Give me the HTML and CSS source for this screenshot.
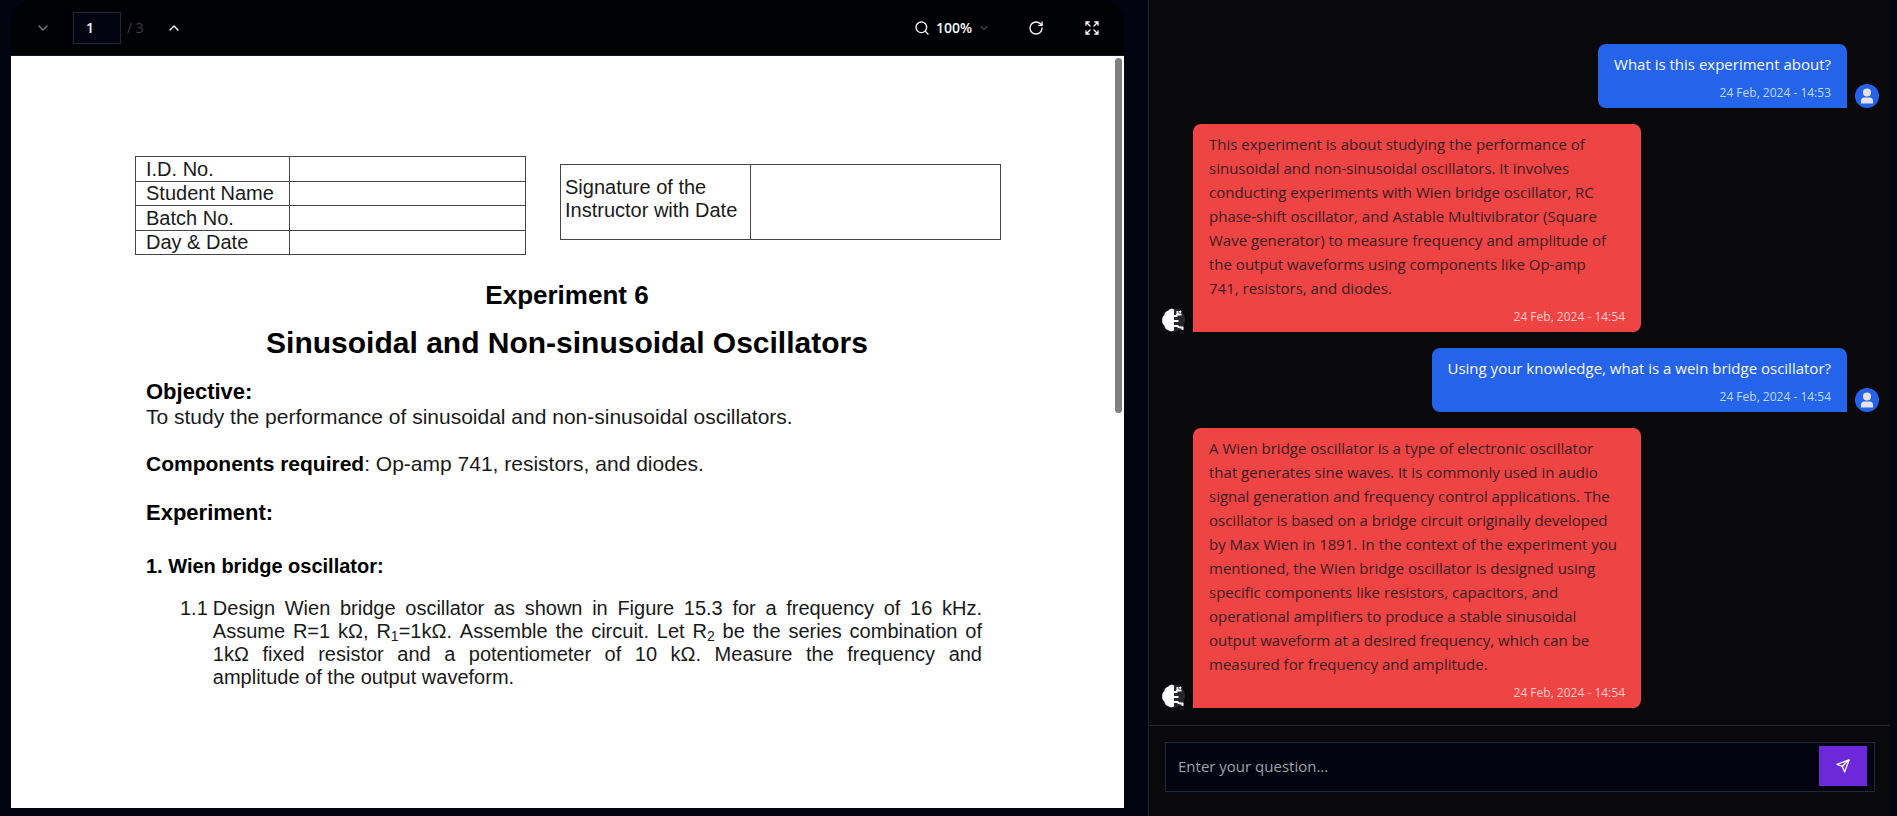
FILE: index.html
```html
<!DOCTYPE html>
<html lang="en">
<head>
<meta charset="utf-8">
<title>Document chat</title>
<link rel="stylesheet" href="styles.css">
</head>
<body>
<main class="app">
  <section class="viewer">
    <header class="toolbar">
      <div class="pager">
        <button class="icon-btn is-dim" aria-label="Previous page"><svg class="icon" viewBox="0 0 24 24"><path d="m6 9 6 6 6-6"/></svg></button>
        <div class="page-field">
          <input class="page-input" type="text" value="1" aria-label="Page number">
          <span class="page-total">/ 3</span>
        </div>
        <button class="icon-btn" aria-label="Next page"><svg class="icon" viewBox="0 0 24 24"><path d="m18 15-6-6-6 6"/></svg></button>
      </div>
      <div class="tools">
        <button class="zoom-btn" aria-label="Zoom"><svg class="icon" viewBox="0 0 24 24"><circle cx="11" cy="11" r="8"/><path d="m21 21-4.3-4.3"/></svg>100%<svg class="icon icon-small is-dim" viewBox="0 0 24 24"><path d="m6 9 6 6 6-6"/></svg></button>
        <button class="icon-btn" aria-label="Rotate"><svg class="icon" viewBox="0 0 24 24"><path d="M21 12a9 9 0 1 1-9-9c2.520 0 4.930 1 6.740 2.740L21 8"/><path d="M21 3v5h-5"/></svg></button>
        <button class="icon-btn" aria-label="Full screen"><svg class="icon" viewBox="0 0 24 24"><path d="m21 21-6-6m6 6v-4.800m0 4.800h-4.800"/><path d="M3 16.200V21m0 0h4.800M3 21l6-6"/><path d="M21 7.800V3m0 0h-4.800M21 3l-6 6"/><path d="M3 7.800V3m0 0h4.800M3 3l6 6"/></svg></button>
      </div>
    </header>
    <article class="page">
      <div class="scroll-thumb"></div>
      <div class="form-tables">
        <table class="id-table">
          <tr><th scope="row">I.D. No.</th><td></td></tr>
          <tr><th scope="row">Student Name</th><td></td></tr>
          <tr><th scope="row">Batch No.</th><td></td></tr>
          <tr><th scope="row">Day &amp; Date</th><td></td></tr>
        </table>
        <table class="sign-table">
          <tr><th scope="row">Signature of the<br>Instructor with Date</th><td></td></tr>
        </table>
      </div>
      <h1 class="exp-number">Experiment 6</h1>
      <h2 class="exp-title">Sinusoidal and Non-sinusoidal Oscillators</h2>
      <h3 class="doc-heading">Objective:</h3>
      <p class="doc-text">To study the performance of sinusoidal and non-sinusoidal oscillators.</p>
      <p class="doc-text components"><b>Components required</b>: Op-amp 741, resistors, and diodes.</p>
      <h3 class="doc-heading experiment">Experiment:</h3>
      <h4 class="doc-subheading">1. Wien bridge oscillator:</h4>
      <div class="step">
        <span>1.1</span>
        <p class="step-text">Design Wien bridge oscillator as shown in Figure 15.3 for a frequency of 16 kHz. Assume R=1 kΩ, R<sub>1</sub>=1kΩ. Assemble the circuit. Let R<sub>2</sub> be the series combination of 1kΩ fixed resistor and a potentiometer of 10 kΩ. Measure the frequency and amplitude&nbsp;of the output waveform.</p>
      </div>
    </article>
  </section>
  <section class="chat">
    <div class="messages">
      <div class="message from-user">
        <div class="bubble"><p>What is this experiment about?</p><time>24 Feb, 2024 - 14:53</time></div>
        <svg class="avatar" viewBox="0 0 24 24"><circle cx="12" cy="12" r="12" fill="#2563eb"/><circle cx="12" cy="8.500" r="4" fill="#e4e4e7"/><path d="M6 19.500v-2.500a3.500 3.500 0 0 1 3.500-3.500h5a3.500 3.500 0 0 1 3.500 3.500v2.500z" fill="#e4e4e7"/></svg>
      </div>
      <div class="message from-bot">
        <svg class="avatar" viewBox="0 0 24 24"><use href="#brain"/></svg>
        <div class="bubble"><p>This experiment is about studying the performance of sinusoidal and non-sinusoidal oscillators. It involves conducting experiments with Wien bridge oscillator, RC phase-shift oscillator, and Astable Multivibrator (Square Wave generator) to measure frequency and amplitude of the output waveforms using components like Op-amp<br>741, resistors, and diodes.</p><time>24 Feb, 2024 - 14:54</time></div>
      </div>
      <div class="message from-user">
        <div class="bubble"><p>Using your knowledge, what is a wein bridge oscillator?</p><time>24 Feb, 2024 - 14:54</time></div>
        <svg class="avatar" viewBox="0 0 24 24"><circle cx="12" cy="12" r="12" fill="#2563eb"/><circle cx="12" cy="8.500" r="4" fill="#e4e4e7"/><path d="M6 19.500v-2.500a3.500 3.500 0 0 1 3.500-3.500h5a3.500 3.500 0 0 1 3.500 3.500v2.500z" fill="#e4e4e7"/></svg>
      </div>
      <div class="message from-bot">
        <svg class="avatar" viewBox="0 0 24 24">
          <g id="brain">
            <circle cx="12.500" cy="12" r="11.500" fill="#27272a"/>
            <path d="M13 1.500C12 .5 8.500.5 7.500 2.500 5 3 3.500 5 3.500 7 1.500 8.500 1 10.500 1.200 13c0 2 .8 3.500 2.300 4.500C3.800 20 5 21.500 7 22c1.500 1.600 4.500 1.800 6 .5z" fill="#fafafa"/>
            <path d="M12 8h3.500l1-2V3M16 6.500h4.500M20 3l-1.500 1.500M12 13h5.500M12 18h4.500c1 2 2.500 1.500 5 1.500v2.500" fill="none" stroke="#fafafa" stroke-width="2"/>
          </g>
        </svg>
        <div class="bubble"><p>A Wien bridge oscillator is a type of electronic oscillator that generates sine waves. It is commonly used in audio signal generation and frequency control applications. The oscillator is based on a bridge circuit originally developed by Max Wien in 1891. In the context of the experiment you mentioned, the Wien bridge oscillator is designed using specific components like resistors, capacitors, and operational amplifiers to produce a stable sinusoidal output waveform at a desired frequency, which can be measured for frequency and amplitude.</p><time>24 Feb, 2024 - 14:54</time></div>
      </div>
    </div>
    <form class="composer">
      <div class="composer-box">
        <input class="question" type="text" placeholder="Enter your question..." aria-label="Your question">
        <button class="send" type="button" aria-label="Send"><svg class="icon" viewBox="0 0 24 24"><path d="m3 9.500 18-6.500-6.500 18-3.500-8.500z"/><path d="M21 3 11 12.500"/></svg></button>
      </div>
    </form>
  </section>
</main>
</body>
</html>
```
FILE: styles.css
```css
* { box-sizing: border-box; margin: 0; padding: 0; }
body { background: #02050f; color: #fafafa; font: 15px/24px "Open Sans", sans-serif; }
button, input { font: inherit; color: inherit; border: 0; background: none; }
.app { display: grid; grid-template-columns: 1148fr 742fr; height: 100vh; padding-right: 7px; }

.viewer { display: flex; flex-direction: column; padding: 0 24px 8px 11px; min-width: 0; }
.toolbar { display: flex; justify-content: space-between; align-items: center; height: 56px; flex: none; padding: 0 8px; background: #000104; border-bottom: 1px solid #10141d; border-radius: 24px 24px 0 0; }
.pager, .tools, .page-field { display: flex; align-items: center; }
.pager { gap: 6px; }
.page-field { gap: 6px; }
.icon { width: 16px; height: 16px; fill: none; stroke: currentColor; stroke-width: 2; stroke-linecap: round; stroke-linejoin: round; flex: none; }
.icon-small { width: 12px; height: 12px; }
.is-dim { opacity: 0.5; }
.icon-btn { display: grid; place-items: center; width: 48px; height: 40px; }
.page-input { width: 48px; height: 32px; padding: 0 12px; background: #02050f; border: 1px solid #1e293b; font-size: 14px; font-weight: 600; }
.page-total { font-size: 14px; color: #3f3f46; }
.tools { gap: 8px; }
.zoom-btn { display: flex; align-items: center; gap: 6px; height: 40px; padding: 0 14px 0 12px; font-size: 14px; font-weight: 600; }

.page { position: relative; flex: 1; min-height: 0; overflow: hidden; padding: 100px 136px 0 135px; background: #fff; color: #1a1a1a; font: 21px/24px "Liberation Sans", Arial, sans-serif; }
.scroll-thumb { position: absolute; top: 2px; right: 2px; width: 7px; height: 355px; border-radius: 4px; background: #808080; }
.form-tables { display: grid; grid-template-columns: 391fr 441fr; gap: 34px; align-items: start; margin: 0 -13px 0 -11px; font-size: 20px; }
.form-tables table { width: 100%; border-collapse: collapse; table-layout: fixed; }
.form-tables th, .form-tables td { border: 1px solid #444; font-weight: 400; text-align: left; }
.id-table { height: 99px; line-height: 22px; }
.id-table th { width: 154px; padding-left: 10px; }
.sign-table { margin-top: 8px; line-height: 23px; }
.sign-table th { width: 190px; height: 75px; padding: 0 0 7px 4px; white-space: nowrap; }
.exp-number, .exp-title { text-align: center; color: #000; }
.exp-number { margin-top: 25px; font-size: 26px; line-height: 30px; }
.exp-title { margin-top: 15px; font-size: 30px; line-height: 36px; }
.doc-heading { margin-top: 18px; font-size: 22px; line-height: 26px; color: #000; }
.doc-text b { color: #000; }
.components { margin-top: 23px; }
.experiment { margin-top: 24px; }
.doc-subheading { margin-top: 28px; font-size: 20px; line-height: 24px; color: #000; }
.step { display: flex; gap: 5px; margin: 19px 6px 0 34px; font-size: 20px; line-height: 23px; }
.step-text { text-align: justify; }
.step-text sub { font-size: 14px; line-height: 1; vertical-align: -3px; }

.chat { display: flex; flex-direction: column; min-width: 0; background: #09090b; border-left: 1px solid #1e293b; }
.messages { flex: 1; display: flex; flex-direction: column; justify-content: flex-end; gap: 16px; padding: 0 11px 17px 12px; }
.message { display: flex; align-items: flex-end; gap: 8px; }
.avatar { width: 24px; height: 24px; flex: none; }
.bubble { display: flex; flex-direction: column; padding: 8px 16px 7px; border-radius: 8px; }
.bubble time { align-self: flex-end; margin-top: 9px; font-size: 12px; line-height: 16px; }
.from-user { justify-content: flex-end; }
.from-user .bubble { background: #2563eb; border-bottom-right-radius: 0; }
.from-user time { color: #bfdbfe; }
.from-bot .bubble { max-width: 448px; background: #ef4444; border-bottom-left-radius: 0; }
.from-bot p { color: #3a1c22; }
.from-bot time { color: #fecaca; }
.composer { padding: 16px 15px 24px 16px; border-top: 1px solid #27272a; }
.composer-box { display: flex; height: 50px; padding: 3px 7px 5px 12px; background: #02050f; border: 1px solid #1e293b; }
.question { flex: 1; min-width: 0; outline: 0; }
.question::placeholder { color: #9ca3af; opacity: 1; }
.send { display: grid; place-items: center; width: 48px; height: 40px; background: #6d28d9; }
```
